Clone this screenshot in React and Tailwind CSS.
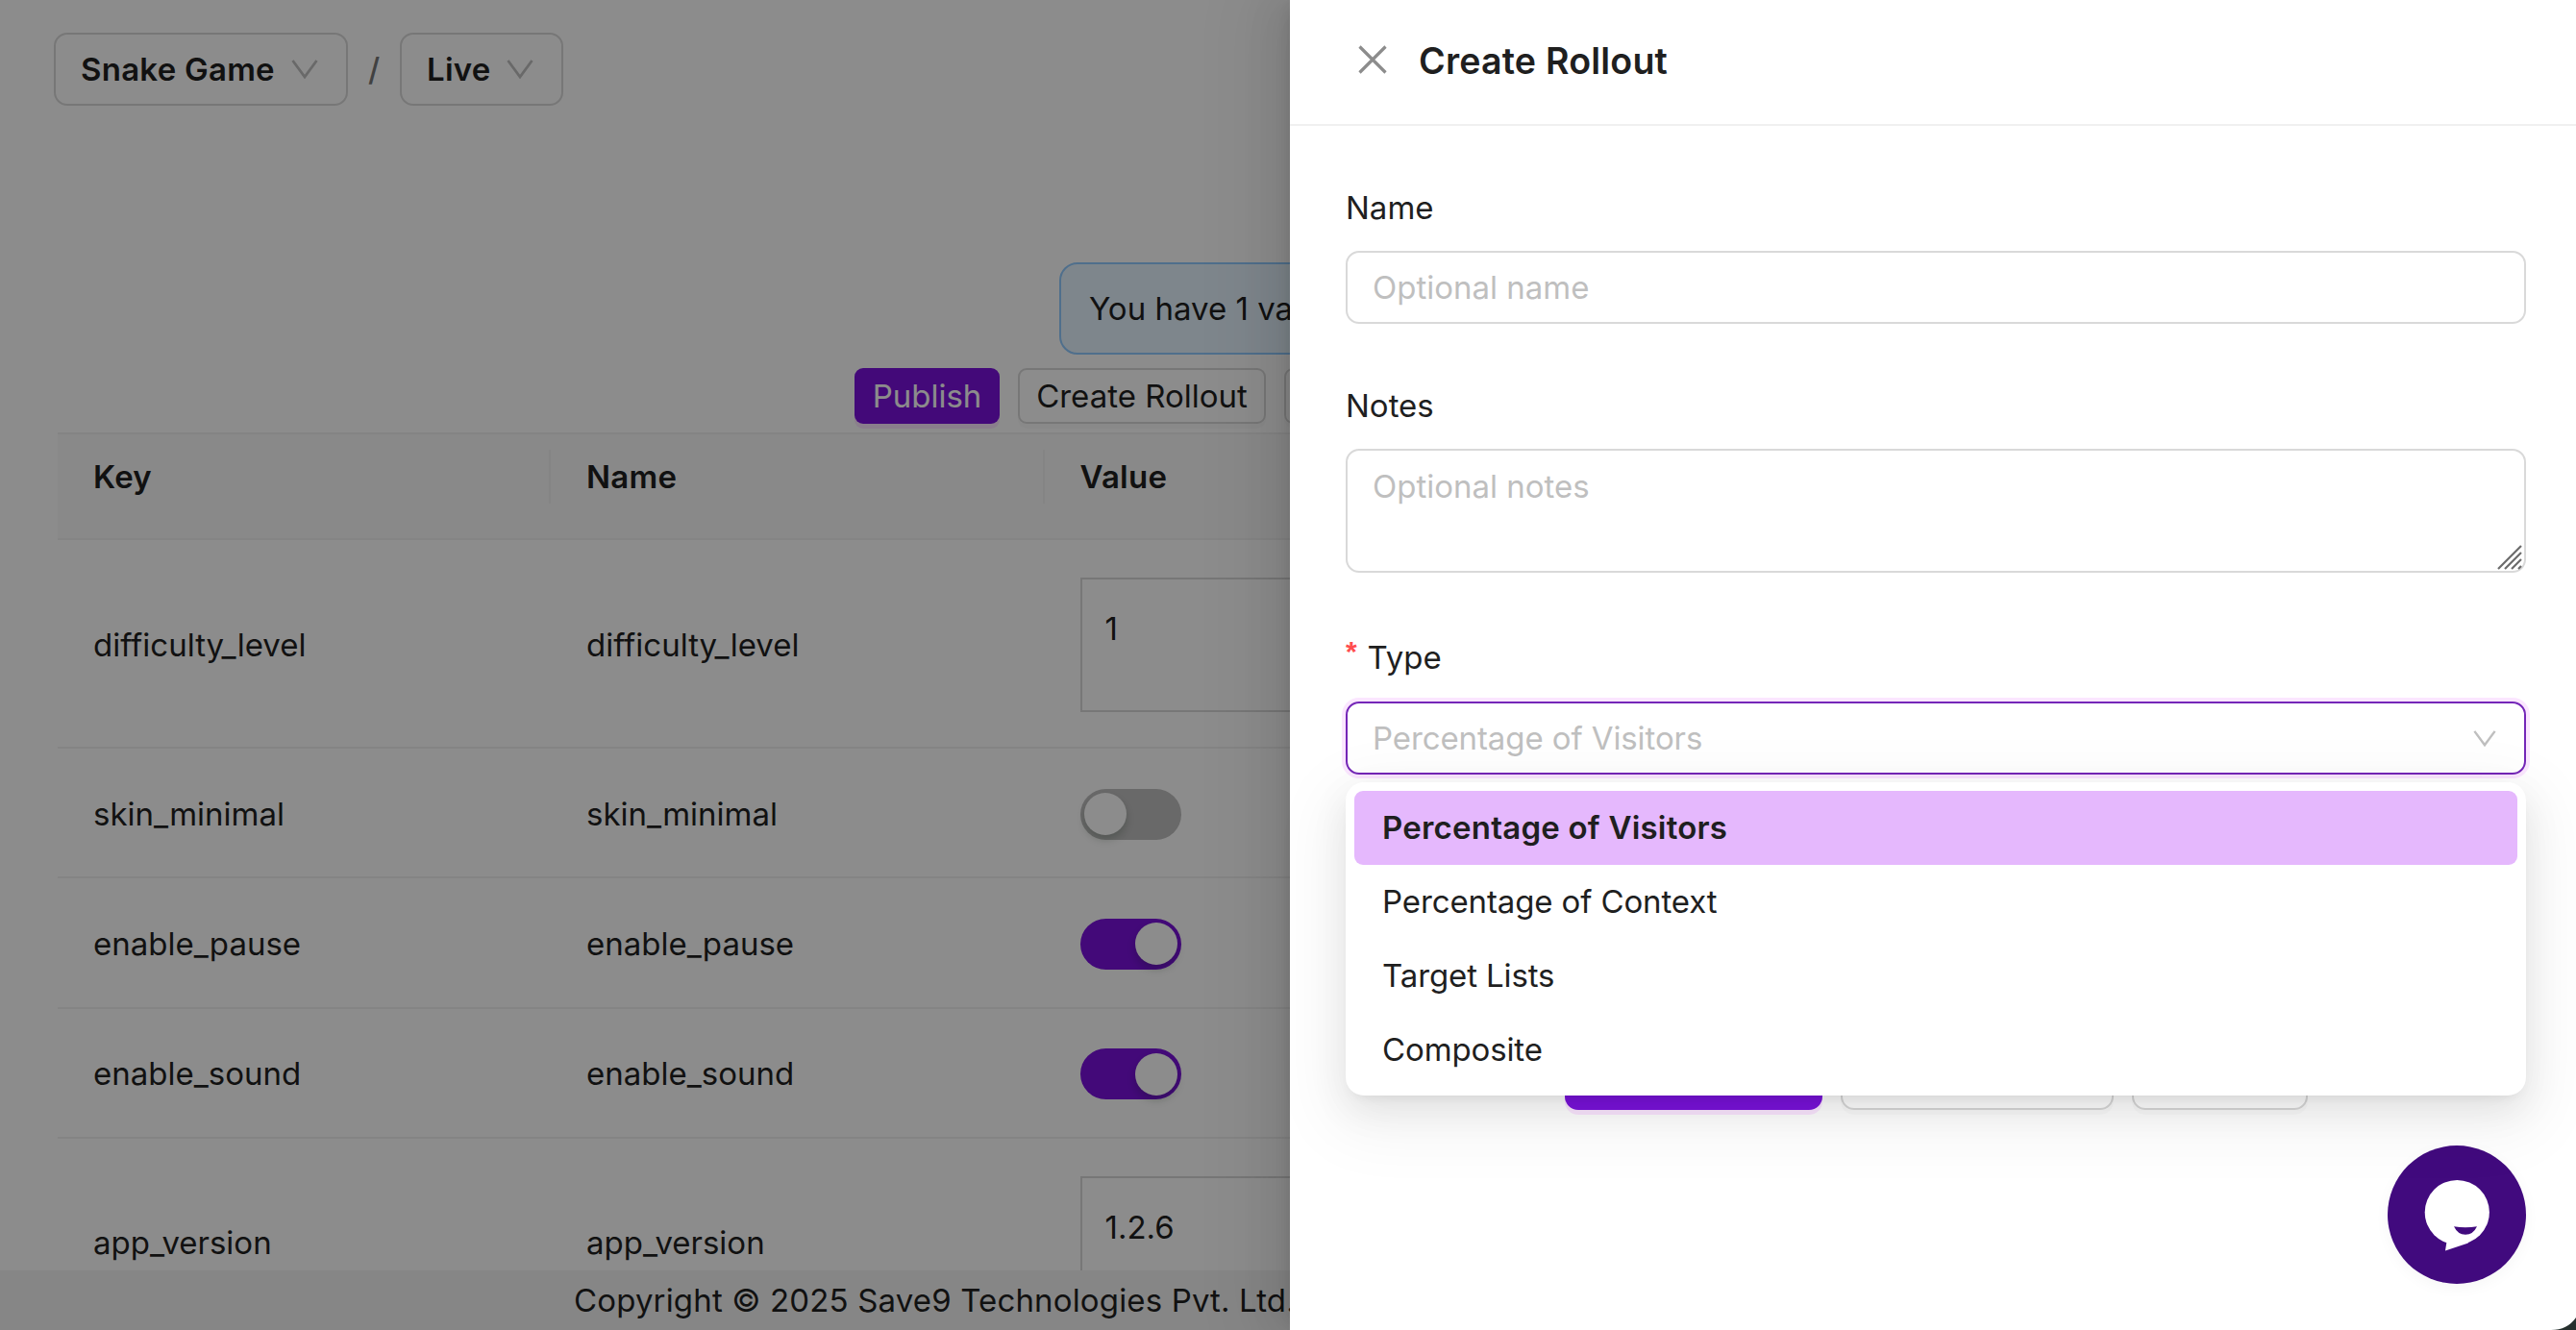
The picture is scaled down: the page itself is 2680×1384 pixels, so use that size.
import clsx from "clsx";

const rows = [
  { key: "difficulty_level", type: "text", value: "1" },
  { key: "skin_minimal", type: "switch", value: false },
  { key: "enable_pause", type: "switch", value: true },
  { key: "enable_sound", type: "switch", value: true },
  { key: "app_version", type: "text", value: "1.2.6" },
];

const options = [
  "Percentage of Visitors",
  "Percentage of Context",
  "Target Lists",
  "Composite",
];

function Chevron({ className }) {
  return (
    <svg
      viewBox="0 0 28 20"
      fill="none"
      stroke="currentColor"
      strokeWidth="2.8"
      className={className}
    >
      <path d="M1.5 1 14 18 26.5 1" />
    </svg>
  );
}

function Switch({ on }) {
  return (
    <div
      className={clsx(
        "flex h-[53px] w-[105px] items-center rounded-full px-1",
        on ? "justify-end bg-[#7a12dc]" : "justify-start bg-[#bfbfbf]"
      )}
    >
      <div className="size-11 rounded-full bg-white shadow-[0_5px_9px_rgba(0,35,11,0.2)]" />
    </div>
  );
}

function Crumb({ label, className }) {
  return (
    <div
      className={clsx(
        "flex h-[76px] items-center justify-between rounded-[14px] border-2 border-[#d9d9d9] pl-[26px] pr-[29px] font-semibold tracking-[0.25px]",
        className
      )}
    >
      {label}
      <Chevron className="h-5 w-7 text-[#bfbfbf]" />
    </div>
  );
}

function Page() {
  return (
    <div className="flex h-[1384px] w-[2680px] flex-col bg-white">
      <main className="h-[1322px] overflow-hidden">
        <div className="flex items-center pl-[56px] pt-[34px]">
          <Crumb label="Snake Game" className="w-[306px]" />
          <span className="w-[54px] text-center font-medium text-[#777]">/</span>
          <Crumb label="Live" className="w-[170px]" />
        </div>

        <div className="mt-[163px] pl-[1102px]">
          <div className="flex h-24 w-[860px] items-center rounded-[19px] border-2 border-[#91caff] bg-[#e6f4ff] px-[29px]">
            You have 1 value
          </div>
        </div>

        <div className="mt-[14px] flex gap-[19px] pl-[889px]">
          <button className="h-[58px] w-[151px] rounded-[9px] bg-[#7a12dc] text-white shadow-[0_5px_0_rgba(213,5,255,0.1)]">
            Publish
          </button>
          <button className="h-[58px] w-[258px] rounded-[9px] border-2 border-[#d9d9d9] shadow-[0_5px_0_rgba(0,0,0,0.02)]">
            Create Rollout
          </button>
          <button className="h-[58px] w-[200px] rounded-[9px] border-2 border-[#d9d9d9] shadow-[0_5px_0_rgba(0,0,0,0.02)]" />
        </div>

        <div className="mt-[9px] pl-[60px]">
          <div className="grid h-[112px] grid-cols-[513px_513.5px_1fr] border-y-2 border-[#f0f0f0] bg-[#fafafa] font-semibold tracking-[0.25px]">
            {["Key", "Name", "Value"].map((title, i) => (
              <div key={title} className="flex pt-[16px]">
                <div
                  className={clsx(
                    "flex h-[56px] flex-1 items-center pl-[37px]",
                    i < 2 && "border-r-2 border-[#f0f0f0]"
                  )}
                >
                  {title}
                </div>
              </div>
            ))}
          </div>

          {rows.map((row) => (
            <div
              key={row.key}
              className={clsx(
                "grid grid-cols-[513px_513.5px_1fr] items-center border-b-2 border-[#f0f0f0] pt-[3px] *:pl-[37px]",
                row.type === "text" ? "h-[217px]" : "h-[135.3px]"
              )}
            >
              <div>{row.key}</div>
              <div>{row.key}</div>
              <div>
                {row.type === "switch" ? (
                  <Switch on={row.value} />
                ) : (
                  <div className="h-[140px] w-[800px] border-2 border-[#d9d9d9] pl-[24px] pt-[25px] leading-[52px]">
                    {row.value}
                  </div>
                )}
              </div>
            </div>
          ))}
        </div>
      </main>

      <footer className="flex flex-1 items-center bg-[#f5f5f5] pl-[597px] tracking-[0.15px]">
        Copyright © 2025 Save9 Technologies Pvt. Ltd.
      </footer>
    </div>
  );
}

function Drawer() {
  return (
    <aside className="absolute inset-y-0 right-0 w-[1338px] bg-white shadow-[-14px_0_38px_0_rgba(0,0,0,0.08),-7px_0_14px_-9px_rgba(0,0,0,0.12),-21px_0_66px_19px_rgba(0,0,0,0.05)]">
      <header className="flex h-[131px] items-center border-b-2 border-[#f0f0f0] pb-[2px] pl-[71px]">
        <svg
          viewBox="0 0 30 30"
          className="mb-[3px] size-[30px] text-[#8c8c8c]"
          fill="none"
          stroke="currentColor"
          strokeWidth="3.2"
        >
          <path d="M1.5 1.5 28.5 28.5M28.5 1.5 1.5 28.5" />
        </svg>
        <h2 className="pl-[33px] text-[37.6px] font-semibold tracking-[0.2px]">Create Rollout</h2>
      </header>

      <div className="px-[52px] pl-[58px]">
        <div className="pt-[59px]">
          <label className="block leading-[52px]">Name</label>
          <div className="mt-[19px] flex h-[76px] items-center rounded-[14px] border-2 border-[#d9d9d9] px-[26px] pt-px text-[#bfbfbf]">
            Optional name
          </div>
        </div>

        <div className="pt-[59px]">
          <label className="block leading-[52px]">Notes</label>
          <div className="relative mt-[19px] h-[129px] rounded-[14px] border-2 border-[#d9d9d9] px-[26px] pt-[11px] leading-[52px] text-[#bfbfbf]">
            Optional notes
            <svg
              viewBox="0 0 26 26"
              className="absolute bottom-[1px] right-[2px] size-[26px] text-[#6b6b6b]"
              fill="none"
              stroke="currentColor"
              strokeWidth="2.2"
            >
              <path d="M1 25 25 1M8 25 25 8M15 25 25 15M22 25 25 22" />
            </svg>
          </div>
        </div>

        <div className="pt-[62px]">
          <label className="flex h-[52px] items-center">
            <span className="mt-[5px] w-[22.5px] self-start font-['Liberation_Sans',sans-serif] text-[30px] font-bold leading-none text-[#ff4d4f]">
              *
            </span>
            Type
          </label>
          <div className="relative mt-[20px]">
            <div className="flex h-[76px] items-center justify-between rounded-[14px] border-2 border-[#7526b8] px-[26px] tracking-[-0.1px] text-[#bfbfbf] shadow-[0_0_0_4px_rgba(213,5,255,0.1)]">
              Percentage of Visitors
              <Chevron className="mr-[3px] h-[17px] w-6" />
            </div>
            <ul className="absolute inset-x-0 top-[84px] z-10 rounded-[19px] bg-white p-[9px] shadow-[0_14px_38px_0_rgba(0,0,0,0.08),0_7px_14px_-9px_rgba(0,0,0,0.12),0_21px_66px_19px_rgba(0,0,0,0.05)]">
              {options.map((option, i) => (
                <li
                  key={option}
                  className={clsx(
                    "flex h-[77px] items-center rounded-[9px] px-[29px]",
                    i === 0
                      ? "bg-[#e5b8fd] font-semibold tracking-[0.22px]"
                      : "tracking-[-0.12px]"
                  )}
                >
                  {option}
                </li>
              ))}
            </ul>
          </div>
        </div>

        <div className="flex justify-center gap-[19px] pt-[273px]">
          <button className="h-[76px] w-[268px] rounded-[14px] bg-[#7a12dc] shadow-[0_5px_0_rgba(213,5,255,0.1)]" />
          <button className="h-[76px] w-[284px] rounded-[14px] border-2 border-[#d9d9d9] shadow-[0_5px_0_rgba(0,0,0,0.02)]" />
          <button className="h-[76px] w-[183px] rounded-[14px] border-2 border-[#d9d9d9] shadow-[0_5px_0_rgba(0,0,0,0.02)]" />
        </div>
      </div>
    </aside>
  );
}

function ChatButton() {
  return (
    <button className="absolute bottom-12 right-[52px] size-36 rounded-full bg-[#410a7e] shadow-[0_4px_16px_rgba(0,0,0,0.04)]">
      <svg viewBox="0 0 144 144" className="size-36">
        <circle cx="72.3" cy="69.5" r="33.6" fill="#fff" />
        <path d="M61.5 100 60 109.5 84 101.5 72 90Z" fill="#fff" />
        <path d="M69 84.3Q81 86 93 84.3Q89 92.8 81 92.8T69 84.3Z" fill="#410a7e" />
      </svg>
    </button>
  );
}

export default function App() {
  return (
    <div className="relative h-[1384px] w-[2680px] overflow-hidden font-['Inter',sans-serif] text-[33px] leading-none text-[#1f1f1f]">
      <Page />
      <div className="absolute inset-0 bg-black/45" />
      <Drawer />
      <ChatButton />
      {/* rounded corner of the window */}
      <svg viewBox="0 0 26 13" className="absolute bottom-0 right-0 h-[13px] w-[26px]">
        <path d="M26 0Q17 13 0 13H26Z" fill="#26302e" />
      </svg>
    </div>
  );
}
